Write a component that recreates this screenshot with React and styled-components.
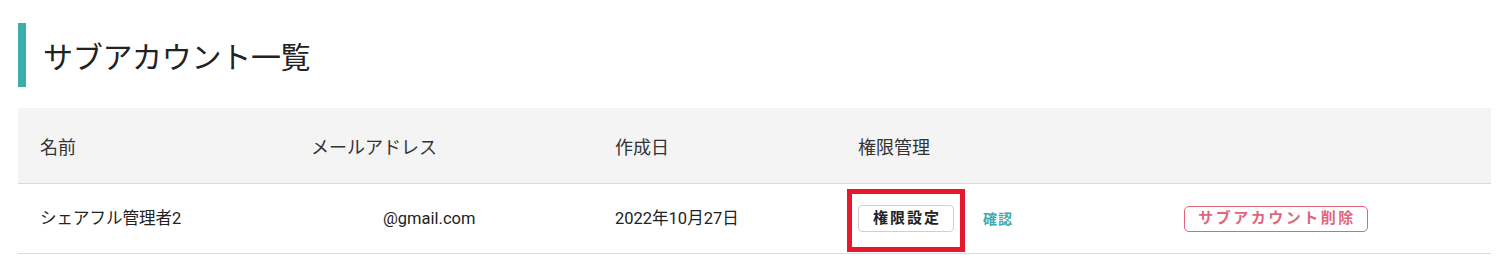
import React from "react";
import styled, { createGlobalStyle } from "styled-components";

const GlobalStyle = createGlobalStyle`
  body {
    margin: 0;
    background: #fff;
    font-family: Roboto, "Noto Sans CJK JP", sans-serif;
    color: #222;
  }
`;

const COLUMNS = "271px 304px 243px 326px 1fr";

const accounts = [
  {
    id: 1,
    name: "シェアフル管理者2",
    email: "@gmail.com",
    createdAt: "2022年10月27日",
  },
];

const App = () => {
  return (
    <Page>
      <GlobalStyle />
      <Title>サブアカウント一覧</Title>
      <Table>
        <HeaderRow>
          <HeadCell>名前</HeadCell>
          <HeadCell>メールアドレス</HeadCell>
          <HeadCell>作成日</HeadCell>
          <HeadCell>権限管理</HeadCell>
          <HeadCell />
        </HeaderRow>
        {accounts.map((account) => (
          <BodyRow key={account.id}>
            <Cell>{account.name}</Cell>
            <Cell>
              {/* user part of the address is hidden */}
              <Email>{account.email}</Email>
            </Cell>
            <Cell>{account.createdAt}</Cell>
            <Cell>
              <Highlight />
              <OutlineButton>権限設定</OutlineButton>
              <TextLink>確認</TextLink>
            </Cell>
            <Cell>
              <DangerButton>サブアカウント削除</DangerButton>
            </Cell>
          </BodyRow>
        ))}
      </Table>
    </Page>
  );
};

export default App;

const Page = styled.div`
  padding: 23px 16px 0 18px;
`;

const Title = styled.h1`
  margin: 0 0 21px;
  height: 64px;
  display: flex;
  align-items: center;
  border-left: 8px solid #3aaeac;
  padding-left: 17px;
  font-size: 30px;
  font-weight: 400;
  color: #222;
  letter-spacing: -0.3px;
`;

const Table = styled.div`
  width: 100%;
`;

const HeaderRow = styled.div`
  display: grid;
  grid-template-columns: ${COLUMNS};
  height: 75px;
  background: #f4f4f4;
  border-bottom: 1px solid #dadada;
`;

const BodyRow = styled.div`
  display: grid;
  grid-template-columns: ${COLUMNS};
  height: 69px;
  border-bottom: 1px solid #dadada;
`;

const HeadCell = styled.div`
  display: flex;
  align-items: center;
  padding-left: 22px;
  font-size: 18px;
  color: #333;
`;

const Cell = styled.div`
  position: relative;
  display: flex;
  align-items: center;
  padding-left: 22px;
  font-size: 16.5px;
  line-height: 24px;
  color: #222;
`;

const Email = styled.span`
  padding-left: 72px;
`;

const Highlight = styled.div`
  position: absolute;
  left: 11px;
  top: 5px;
  width: 118px;
  height: 63px;
  box-sizing: border-box;
  border: 5px solid #e8192c;
  pointer-events: none;
`;

const OutlineButton = styled.button`
  width: 96px;
  height: 27px;
  padding: 0 0 0 2px;
  box-sizing: border-box;
  background: #fff;
  border: 1px solid #cfcfcf;
  border-radius: 4px;
  font-family: inherit;
  font-size: 15px;
  line-height: 1;
  font-weight: 700;
  letter-spacing: 2px;
  color: #222;
  cursor: pointer;
`;

const TextLink = styled.a`
  margin-left: 29px;
  font-size: 14px;
  font-weight: 700;
  letter-spacing: 1px;
  color: #3fa9ad;
  cursor: pointer;
`;

const DangerButton = styled.button`
  width: 184px;
  height: 26px;
  padding: 0 0 0 2px;
  box-sizing: border-box;
  background: #fff;
  border: 1px solid #e0657d;
  border-radius: 5px;
  font-family: inherit;
  font-size: 15px;
  line-height: 1;
  font-weight: 700;
  letter-spacing: 2.5px;
  color: #e0657d;
  cursor: pointer;
`;
